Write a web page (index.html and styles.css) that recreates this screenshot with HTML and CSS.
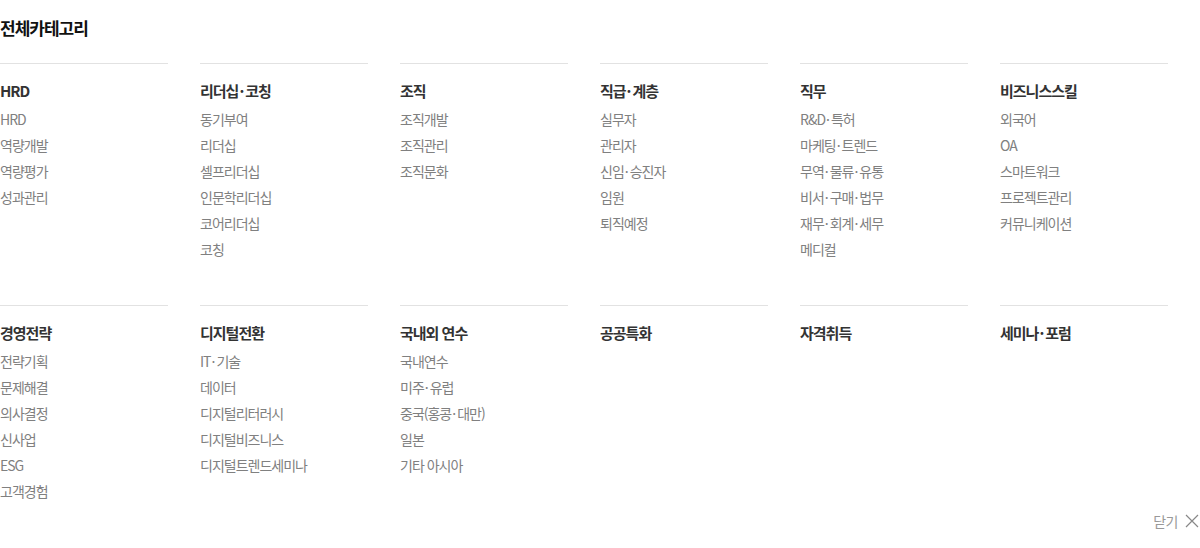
FILE: index.html
```html
<!DOCTYPE html>
<html lang="ko">
<head>
<meta charset="utf-8">
<link rel="stylesheet" href="styles.css">
</head>
<body>
<div class="page">
  <h2 class="title">전체카테고리</h2>
  <div class="grid">
    <div class="col"><h3>HRD</h3><ul><li>HRD</li><li>역량개발</li><li>역량평가</li><li>성과관리</li></ul></div>
    <div class="col"><h3>리더십<span class="dot">·</span>코칭</h3><ul><li>동기부여</li><li>리더십</li><li>셀프리더십</li><li>인문학리더십</li><li>코어리더십</li><li>코칭</li></ul></div>
    <div class="col"><h3>조직</h3><ul><li>조직개발</li><li>조직관리</li><li>조직문화</li></ul></div>
    <div class="col"><h3>직급<span class="dot">·</span>계층</h3><ul><li>실무자</li><li>관리자</li><li>신임<span class="dot">·</span>승진자</li><li>임원</li><li>퇴직예정</li></ul></div>
    <div class="col"><h3>직무</h3><ul><li>R&amp;D<span class="dot">·</span>특허</li><li>마케팅<span class="dot">·</span>트렌드</li><li>무역<span class="dot">·</span>물류<span class="dot">·</span>유통</li><li>비서<span class="dot">·</span>구매<span class="dot">·</span>법무</li><li>재무<span class="dot">·</span>회계<span class="dot">·</span>세무</li><li>메디컬</li></ul></div>
    <div class="col"><h3>비즈니스스킬</h3><ul><li>외국어</li><li>OA</li><li>스마트워크</li><li>프로젝트관리</li><li>커뮤니케이션</li></ul></div>
    <div class="col"><h3>경영전략</h3><ul><li>전략기획</li><li>문제해결</li><li>의사결정</li><li>신사업</li><li>ESG</li><li>고객경험</li></ul></div>
    <div class="col"><h3>디지털전환</h3><ul><li>IT<span class="dot">·</span>기술</li><li>데이터</li><li>디지털리터러시</li><li>디지털비즈니스</li><li>디지털트렌드세미나</li></ul></div>
    <div class="col"><h3>국내외 연수</h3><ul><li>국내연수</li><li>미주<span class="dot">·</span>유럽</li><li>중국(홍콩<span class="dot">·</span>대만)</li><li>일본</li><li>기타 아시아</li></ul></div>
    <div class="col"><h3>공공특화</h3></div>
    <div class="col"><h3>자격취득</h3></div>
    <div class="col"><h3>세미나<span class="dot">·</span>포럼</h3></div>
  </div>
  <div class="close-row">
    <button class="close">닫기<svg width="14" height="14" viewBox="0 0 14 14"><path d="M1 1L13 13M13 1L1 13" stroke="#888" stroke-width="1.2" fill="none"/></svg></button>
  </div>
</div>
</body>
</html>
```
FILE: styles.css
```css
* { box-sizing: border-box; }
html, body { margin: 0; padding: 0; background: #fff; }
body { font-family: "Noto Sans CJK KR", "Noto Sans", sans-serif; color: #222; }
.page { width: 1200px; padding-top: 16px; }
.title { margin: 0 0 23px; font-size: 17px; line-height: 24px; font-weight: 700; color: #111; letter-spacing: -1px; }
.grid { display: grid; grid-template-columns: repeat(6, 168px); column-gap: 32px; row-gap: 43px; align-items: start; }
.col { border-top: 1px solid #e2e2e2; padding-top: 14px; }
.col h3 { margin: 0; font-size: 15px; line-height: 26px; font-weight: 700; color: #333; letter-spacing: -1px; }
.col ul { list-style: none; margin: 2px 0 0; padding: 0; }
.col li { font-size: 14px; line-height: 26px; color: #808080; letter-spacing: -1px; }
.dot { padding: 0 2px 0 1px; }
.close-row { display: flex; justify-content: flex-end; margin-top: 4px; }
.close { display: flex; align-items: center; gap: 7px; border: 0; background: none; padding: 0 1px 0 0; font-family: inherit; font-size: 14px; line-height: 26px; color: #999; cursor: pointer; letter-spacing: -0.5px; }
```
